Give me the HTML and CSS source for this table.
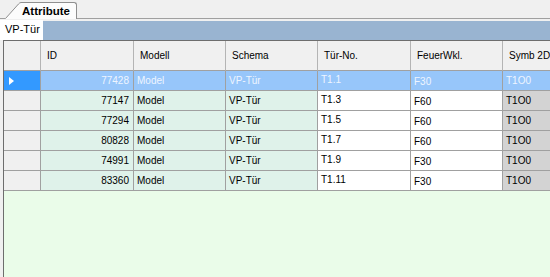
FILE: index.html
```html
<!DOCTYPE html>
<html lang="de">
<head>
    <meta charset="UTF-8">
    <meta name="viewport" content="width=device-width, initial-scale=1.0">
    <title>Attribute</title>
    <link rel="stylesheet" href="styles.css">
</head>
<body>
    <!-- obere Registerkarte -->
    <div class="tabstrip">
        <div class="tab">
            <svg class="tab-slant" width="16" height="17" viewBox="0 0 16 17">
                <polygon points="0.5,16.5 13.5,2 16,0.5 16,17 0,17" fill="#fcfcfc"/>
                <path d="M0.5 16.5 L13.5 2 Q14.8 0.5 16 0.5" fill="none" stroke="#8f8f8f" stroke-width="1"/>
            </svg>
            <div class="tab-label">Attribute</div>
        </div>
    </div>

    <!-- Schema-Auswahl -->
    <div class="subtabs">
        <div class="subtab">VP-Tür</div>
        <div class="subtab-bar"></div>
    </div>

    <div class="grid">
        <table class="grid-table">
            <colgroup>
                <col style="width: 37px">
                <col style="width: 93px">
                <col style="width: 92px">
                <col style="width: 92px">
                <col style="width: 93px">
                <col style="width: 92px">
                <col style="width: 100px">
            </colgroup>
            <thead>
                <tr>
                    <th class="rowhdr"></th>
                    <th>ID</th>
                    <th>Modell</th>
                    <th>Schema</th>
                    <th>Tür-No.</th>
                    <th>FeuerWkl.</th>
                    <th>Symb 2D</th>
                </tr>
            </thead>
            <tbody id="rows"></tbody>
        </table>
    </div>

    <script>
        var doors = [
            { id: 77428, modell: 'Model', schema: 'VP-Tür', nr: 'T1.1', feuer: 'F30', symb: 'T1O0' },
            { id: 77147, modell: 'Model', schema: 'VP-Tür', nr: 'T1.3', feuer: 'F60', symb: 'T1O0' },
            { id: 77294, modell: 'Model', schema: 'VP-Tür', nr: 'T1.5', feuer: 'F60', symb: 'T1O0' },
            { id: 80828, modell: 'Model', schema: 'VP-Tür', nr: 'T1.7', feuer: 'F60', symb: 'T1O0' },
            { id: 74991, modell: 'Model', schema: 'VP-Tür', nr: 'T1.9', feuer: 'F30', symb: 'T1O0' },
            { id: 83360, modell: 'Model', schema: 'VP-Tür', nr: 'T1.11', feuer: 'F30', symb: 'T1O0' }
        ];

        var body = document.getElementById('rows');
        doors.forEach(function(d, i) {
            var tr = document.createElement('tr');
            if (i === 0) tr.className = 'selected';
            tr.innerHTML =
                '<td class="rowhdr">' + (i === 0 ? '<span class="arrow"></span>' : '') + '</td>' +
                '<td class="ro num">' + d.id + '</td>' +
                '<td class="ro">' + d.modell + '</td>' +
                '<td class="ro">' + d.schema + '</td>' +
                '<td class="edit nr">' + d.nr + '</td>' +
                '<td class="edit feuer">' + d.feuer + '</td>' +
                '<td class="symb">' + d.symb + '</td>';
            body.appendChild(tr);
        });
    </script>
</body>
</html>
```

FILE: styles.css
```css
html, body {
    height: 100%;
}

body {
    margin: 0;
    background-color: #f0f0f0;
    font-family: "Liberation Sans", Arial, sans-serif;
    font-size: 10px;
    color: #000;
    display: flex;
    flex-direction: column;
    overflow: hidden;
}

/* Registerkarte oben */
.tabstrip {
    height: 18px;
    padding-left: 5px;
    border-bottom: 1px solid #a0a0a0;
    display: flex;
    align-items: flex-end;
    flex-shrink: 0;
}

.tab {
    display: flex;
    align-items: flex-end;
    height: 17px;
    margin-bottom: -1px;
}

.tab-slant {
    display: block;
}

.tab-label {
    height: 16px;
    padding: 0 6px 0 1px;
    background-color: #fcfcfc;
    border-top: 1px solid #8f8f8f;
    border-right: 1px solid #8f8f8f;
    border-top-right-radius: 3px;
    font-size: 11.5px;
    font-weight: bold;
    line-height: 16px;
}

.subtabs {
    display: flex;
    height: 20px;
    margin-top: 1px;
    flex-shrink: 0;
}

.subtab {
    width: 43px;
    padding-left: 5px;
    box-sizing: border-box;
    background-color: #fff;
    font-size: 11px;
    line-height: 19px;
}

.subtab-bar {
    flex: 1;
    margin-top: 1px;
    background-color: #99b4d1;
}

/* Datentabelle */
.grid {
    flex: 1;
    margin-left: 3px;
    border-left: 1px solid #6d6d6d;
    border-top: 1px solid #6d6d6d;
    background-color: #eafce9;
    overflow: hidden;
}

.grid-table {
    border-collapse: separate;
    border-spacing: 0;
    table-layout: fixed;
    width: 599px;
}

.grid-table th,
.grid-table td {
    box-sizing: border-box;
    border-right: 1px solid #a0a0a0;
    border-bottom: 1px solid #a0a0a0;
    white-space: nowrap;
    overflow: hidden;
}

.grid-table th {
    height: 30px;
    padding: 0 6px;
    background-color: #f0f0f0;
    font-weight: normal;
    text-align: left;
    border-right-color: #b4b4b4;
}

.grid-table td {
    height: 20px;
    padding: 0 3px;
    vertical-align: middle;
}

.grid-table td.rowhdr {
    background-color: #f0f0f0;
    padding: 0;
}

.grid-table td.num {
    text-align: right;
    padding-right: 4px;
}

.grid-table td.ro {
    background-color: #dff2ea;
}

.grid-table td.edit {
    background-color: #fff;
}

.grid-table td.nr {
    padding-bottom: 3px;
}

.grid-table td.feuer {
    padding-top: 2px;
}

.grid-table td.symb {
    background-color: #d3d3d3;
}

/* markierte Zeile */
.grid-table tr.selected td {
    background-color: #97c6fa;
    color: #eef5ff;
}

.grid-table tr.selected td.rowhdr {
    background-color: #3399ff;
}

.arrow {
    display: inline-block;
    margin-left: 5px;
    margin-top: 2px;
    border-left: 5px solid #fff;
    border-top: 4px solid transparent;
    border-bottom: 4px solid transparent;
}
```
